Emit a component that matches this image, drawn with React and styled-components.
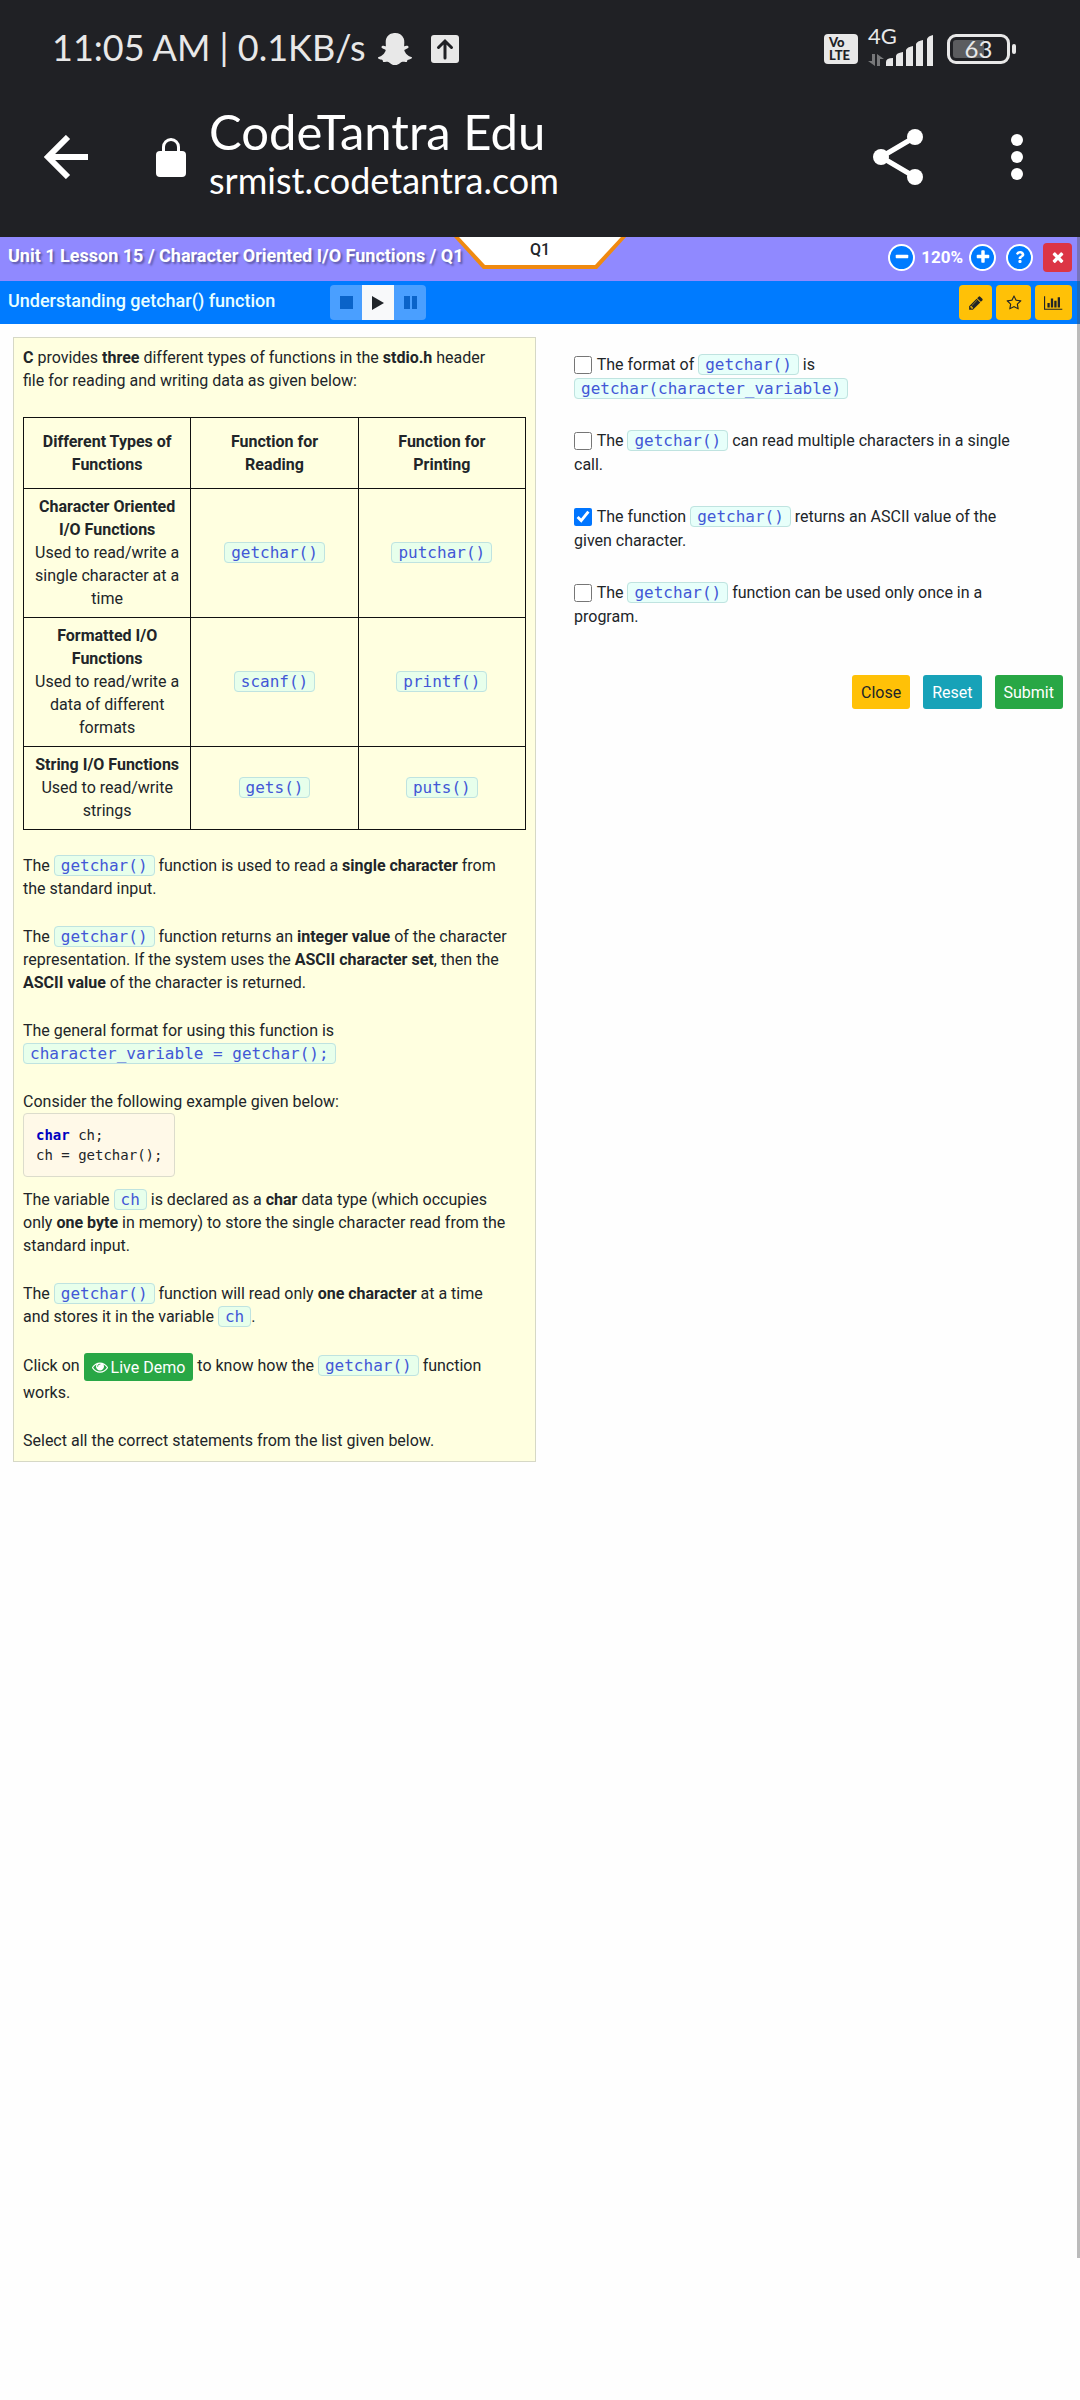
import React from "react";
import styled, { createGlobalStyle } from "styled-components";
import { FaSnapchatGhost, FaQuestion } from "react-icons/fa";

const GlobalStyle = createGlobalStyle`
  *, *::before, *::after { box-sizing: border-box; }
  body {
    margin: 0;
    background: #fefefe;
    color: #212529;
    font-family: Roboto, "Liberation Sans", sans-serif;
    font-size: 16px;
    line-height: 23px;
  }
  button { font-family: inherit; cursor: pointer; }
`;

/* ---------- device chrome ---------- */

const Chrome = styled.header`
  background: #202125;
  color: #fff;
  height: 237px;
  font-family: Lato, Roboto, sans-serif;
`;

const StatusBar = styled.div`
  display: flex;
  align-items: center;
  height: 94px;
  padding: 0 64px 0 52px;
  color: #e8e8e8;
`;

const Clock = styled.span`
  font-size: 36px;
  line-height: 48px;
  white-space: nowrap;
`;

const Spacer = styled.span`
  flex: 1;
`;

const StatusIcons = styled.span`
  display: flex;
  align-items: center;
  gap: 19px;
  margin-left: 12px;
  padding-top: 4px;
`;

const Indicators = styled.span`
  display: flex;
  align-items: center;
  gap: 10px;
  padding-top: 4px;
`;

const Volte = styled.span`
  display: flex;
  flex-direction: column;
  align-items: flex-start;
  justify-content: center;
  width: 34px;
  height: 30px;
  padding-left: 5px;
  border-radius: 4px;
  background: #e8e8e8;
  color: #202125;
  font-size: 13px;
  font-weight: 900;
  line-height: 13px;
`;

const Network = styled.span`
  display: grid;
  grid-template-columns: 18px 48px;
  height: 42px;
  margin-bottom: 9px;
`;

const NetworkType = styled.span`
  grid-row: 1;
  grid-column: 1;
  font-size: 22px;
  line-height: 24px;
  white-space: nowrap;
`;

const Traffic = styled.svg`
  grid-row: 1;
  grid-column: 1;
  align-self: end;
`;

const Bars = styled.svg`
  grid-row: 1;
  grid-column: 2;
  align-self: end;
`;

const Battery = styled.span`
  display: flex;
  align-items: center;
  margin-left: 3px;

  &::after {
    content: "";
    width: 4px;
    height: 10px;
    margin-left: 2px;
    border-radius: 2px;
    background: #e8e8e8;
  }
`;

const BatteryBody = styled.span`
  width: 63px;
  height: 30px;
  border: 3px solid #e8e8e8;
  border-radius: 9px;
  padding: 3px;
  font-size: 24px;
  line-height: 18px;
  text-align: center;
  background: linear-gradient(90deg, #5b5c5f 60%, transparent 60%) content-box;
`;

const BrowserBar = styled.div`
  display: flex;
  align-items: center;
  height: 126px;
  padding: 0 57px 0 44px;
`;

const IconButton = styled.button`
  display: flex;
  padding: 0;
  border: 0;
  background: none;
  color: inherit;
`;

const Lock = styled.svg`
  margin-left: 68px;
`;

const Address = styled.div`
  flex: 1;
  margin-left: 23px;
  padding-bottom: 8px;
  white-space: nowrap;
`;

const PageTitle = styled.div`
  font-size: 49px;
  line-height: 54px;
`;

const PageHost = styled.div`
  font-size: 36px;
  line-height: 44px;
`;

const BrowserActions = styled.div`
  display: flex;
  align-items: center;
  gap: 88px;
`;

/* ---------- lesson bars ---------- */

const WebView = styled.div`
  position: relative;
  min-height: calc(100vh - 379px);
`;

const ScrollThumb = styled.div`
  position: absolute;
  top: 0;
  right: 0;
  bottom: 0;
  width: 3px;
  background: rgba(80, 80, 80, 0.38);
`;

const LessonBar = styled.div`
  display: grid;
  grid-template-columns: minmax(0, 1fr) auto minmax(0, 1fr);
  height: 44px;
  padding: 0 8px;
  background: #9089ff;
  color: #fff;
`;

const Breadcrumb = styled.h1`
  margin: 0;
  padding-top: 7px;
  font-size: 18px;
  font-weight: 700;
  line-height: 24px;
  white-space: nowrap;
  text-shadow: 2px 2px 2px rgba(0, 0, 0, 0.35);
`;

const QuestionTab = styled.div`
  width: 172px;
  height: 32px;
  background: #f08a10;
  clip-path: polygon(0 0, 100% 0, 143px 100%, 29px 100%);
`;

const QuestionLabel = styled.div`
  height: 28px;
  background: #fff;
  color: #212529;
  clip-path: polygon(5px 0, 167px 0, 141px 100%, 31px 100%);
  font-size: 16px;
  font-weight: 500;
  line-height: 26px;
  text-align: center;
`;

const LessonTools = styled.div`
  display: flex;
  justify-content: flex-end;
  align-items: center;
  height: 40px;
  gap: 10px;
`;

const ZoomControl = styled.div`
  display: flex;
  align-items: center;
  gap: 6px;
`;

const ZoomValue = styled.output`
  font-size: 17px;
  font-weight: 700;
`;

const RoundButton = styled.button`
  display: flex;
  align-items: center;
  justify-content: center;
  width: 27px;
  height: 27px;
  padding: 0;
  border: 2px solid #fff;
  border-radius: 50%;
  background: #007bff;
  color: #fff;
`;

const SquareButton = styled.button`
  display: flex;
  align-items: center;
  justify-content: center;
  width: ${(p) => p.$width}px;
  height: ${(p) => p.$height}px;
  padding: 0;
  border: 0;
  border-radius: 4px;
  background: ${(p) => p.$bg};
  color: ${(p) => p.$fg};
`;

const TopicBar = styled.div`
  display: flex;
  align-items: center;
  height: 43px;
  padding: 0 8px;
  background: #007bff;
  color: #e8ffff;
`;

const Topic = styled.h2`
  flex: 0 0 322px;
  margin: 0;
  padding-bottom: 3px;
  font-size: 18px;
  font-weight: 500;
  line-height: 24px;
`;

const Player = styled.div`
  display: flex;
  border-radius: 4px;
  overflow: hidden;
`;

const PlayerButton = styled.button`
  display: flex;
  align-items: center;
  justify-content: center;
  width: 32px;
  height: 35px;
  padding: 0;
  border: 0;
  background: ${(p) => (p.$active ? "#f8f9fa" : "#4a9fff")};
  color: ${(p) => (p.$active ? "#212529" : "#0a63c9")};
`;

const TopicTools = styled.div`
  display: flex;
  gap: 4px;
  margin-left: auto;
`;

/* ---------- content ---------- */

const Columns = styled.main`
  display: grid;
  grid-template-columns: 1fr 1fr;
  align-items: start;
  padding-top: 13px;
`;

const Lesson = styled.article`
  margin: 0 4px 0 13px;
  padding: 8px 9px 9px;
  border: 1px solid #d6d8c6;
  background: #ffffe0;
`;

const Para = styled.p`
  margin: 0 0 ${(p) => (p.$tight ? 0 : 25)}px;
  padding-right: 18px;
`;

const Code = styled.code`
  padding: 0 6px;
  border: 1px solid #bfe3e0;
  border-radius: 4px;
  background: rgba(208, 255, 246, 0.5);
  color: #4257d6;
  font-family: "DejaVu Sans Mono", monospace;
  font-size: 16px;
  line-height: 20px;
  white-space: nowrap;
`;

const FunctionTable = styled.table`
  width: 100%;
  margin-bottom: 24px;
  border-collapse: collapse;
  table-layout: fixed;
  text-align: center;
`;

const Cell = styled.td`
  padding: 6px 6px 7px;
  border: 1px solid #111;
`;

const HeadCell = styled.th`
  padding: 12px 16px;
  border: 1px solid #111;
  font-weight: 700;
`;

const Listing = styled.pre`
  width: fit-content;
  margin: 0 0 11px;
  padding: 11px 12px;
  border: 1px solid #dcdccc;
  border-radius: 4px;
  background: #fff9e8;
  font-family: "DejaVu Sans Mono", monospace;
  font-size: 14px;
  line-height: 20px;
`;

const Keyword = styled.b`
  color: #0000c0;
`;

const DemoButton = styled.button`
  display: inline-flex;
  align-items: center;
  gap: 3px;
  height: 28px;
  padding: 0 8px;
  border: 0;
  border-radius: 3px;
  background: #28a745;
  color: #fff;
  font-size: 16px;
  vertical-align: middle;
`;

const Quiz = styled.form`
  padding: 16px 17px 0 34px;
`;

const Option = styled.label`
  display: block;
  margin: 0 32px 28px 0;
  line-height: 24px;
`;

const Tick = styled.input`
  width: 18px;
  height: 18px;
  margin: 0 1px 0 0;
  vertical-align: -4px;
  accent-color: #0075ff;
`;

const Actions = styled.div`
  display: flex;
  justify-content: flex-end;
  gap: 13px;
  padding-top: 18px;
`;

const ActionButton = styled.button`
  height: 34px;
  padding: 0 9px;
  border: 0;
  border-radius: 3px;
  background: ${(p) => p.$bg};
  color: ${(p) => p.$fg || "#fff"};
  font-size: 16px;
`;

/* ---------- glyphs ---------- */

const glyphs = {
  eye: [1792, "M1664 960q-152-236-381-353 61 104 61 225 0 185-131.5 316.5t-316.5 131.5-316.5-131.5-131.5-316.5q0-121 61-225-229 117-381 353 133 205 333.5 326.5t434.5 121.5 434.5-121.5 333.5-326.5zm-720-384q0-20-14-34t-34-14q-125 0-214.5 89.5t-89.5 214.5q0 20 14 34t34 14 34-14 14-34q0-86 61-147t147-61q20 0 34-14t14-34zm848 384q0 34-20 69-140 230-376.5 368.5t-499.5 138.5-499.5-139-376.5-368q-20-35-20-69t20-69q140-229 376.5-368t499.5-139 499.5 139 376.5 368q20 35 20 69z"],
  chart: [2048, "M640 896v512h-256v-512h256zm384-512v1024h-256v-1024h256zm1024 1152v128h-2048v-1536h128v1408h1920zm-640-896v768h-256v-768h256zm384-384v1152h-256v-1152h256z"],
  star: [1792, "M1201 1004l306-297-422-62-189-382-189 382-422 62 306 297-73 421 378-199 377 199zm527-357q0 22-26 48l-363 354 86 500q1 7 1 20 0 50-41 50-19 0-40-12l-449-236-449 236q-22 12-40 12-21 0-31.5-14.5t-10.5-35.5q0-6 2-20l86-500-364-354q-25-27-25-48 0-37 56-46l502-73 225-455q19-41 49-41t49 41l225 455 502 73q56 9 56 46z"],
  pencil: [1792, "M491 1536l91-91-235-235-91 91v107h128v128h107zm523-928q0-22-22-22-10 0-17 7l-542 542q-7 7-7 17 0 22 22 22 10 0 17-7l542-542q7-7 7-17zm-54-192l416 416-832 832h-416v-416zm683 96q0 53-37 90l-166 166-416-416 166-165q36-38 90-38 53 0 91 38l235 234q37 39 37 91z"],
  plus: [1792, "M1600 736v192q0 40-28 68t-68 28h-416v416q0 40-28 68t-68 28h-192q-40 0-68-28t-28-68v-416h-416q-40 0-68-28t-28-68v-192q0-40 28-68t68-28h416v-416q0-40 28-68t68-28h192q40 0 68 28t28 68v416h416q40 0 68 28t28 68z"],
  minus: [1792, "M1600 736v192q0 40-28 68t-68 28h-1216q-40 0-68-28t-28-68v-192q0-40 28-68t68-28h1216q40 0 68 28t28 68z"],
  times: [1792, "M1490 1322q0 40-28 68l-136 136q-28 28-68 28t-68-28l-294-294-294 294q-28 28-68 28t-68-28l-136-136q-28-28-28-68t28-68l294-294-294-294q-28-28-28-68t28-68l136-136q28-28 68-28t68 28l294 294 294-294q28-28 68-28t68 28l136 136q28 28 28 68t-28 68l-294 294 294 294q28 28 28 68z"],
};

function Glyph({ name, size }) {
  const [width, d] = glyphs[name];
  return (
    <svg viewBox={`0 0 ${width} 1792`} height={size} fill="currentColor" aria-hidden="true">
      <path d={d} />
    </svg>
  );
}

const rows = [
  ["Character Oriented I/O Functions", "Used to read/write a single character at a time", "getchar()", "putchar()"],
  ["Formatted I/O Functions", "Used to read/write a data of different formats", "scanf()", "printf()"],
  ["String I/O Functions", "Used to read/write strings", "gets()", "puts()"],
];

const options = [
  { body: <>The format of <Code>getchar()</Code> is <Code>getchar(character_variable)</Code></> },
  { body: <>The <Code>getchar()</Code> can read multiple characters in a single call.</> },
  { body: <>The function <Code>getchar()</Code> returns an ASCII value of the given character.</>, checked: true },
  { body: <>The <Code>getchar()</Code> function can be used only once in a program.</> },
];

function DeviceChrome() {
  return (
    <Chrome>
      <StatusBar>
        <Clock>11:05 AM | 0.1KB/s</Clock>
        <StatusIcons>
          <FaSnapchatGhost size={34} aria-hidden="true" />
          <svg width="28" height="28" viewBox="0 0 28 28" aria-hidden="true">
            <rect width="28" height="28" rx="3" fill="#e8e8e8" />
            <path d="M14 23V7M7.500 12.500L14 6l6.500 6.500" fill="none" stroke="#202125" strokeWidth="3" strokeLinecap="round" />
          </svg>
        </StatusIcons>
        <Spacer />
        <Indicators>
          <Volte><span>Vo</span><span>LTE</span></Volte>
          <Network>
            <NetworkType>4G</NetworkType>
            <Traffic width="16" height="12" viewBox="0 0 16 12" fill="#77787a" aria-hidden="true">
              <path d="M4 0h3v12L0 7h4zM9 0l7 5h-4v7H9z" />
            </Traffic>
            <Bars width="48" height="31" viewBox="0 0 48 31" fill="#e8e8e8" aria-hidden="true">
              <path d="M0 31v-4q0-4 7-4v8zM10 31V21q0-3 7-4v14zM20 31V15q1-3 7-4v20zM30 31V9q1-3 7-4v26zM41 31V4q1-3 6-4v31z" />
            </Bars>
          </Network>
          <Battery><BatteryBody>63</BatteryBody></Battery>
        </Indicators>
      </StatusBar>
      <BrowserBar>
        <IconButton aria-label="Back">
          <svg width="44" height="44" viewBox="0 0 44 44" fill="none" stroke="#fff" strokeWidth="6" aria-hidden="true">
            <path d="M44 22H6M24 2L4 22l20 20" />
          </svg>
        </IconButton>
        <Lock width="30" height="39" viewBox="0 0 30 39" aria-label="Secure">
          <rect y="13" width="30" height="26" rx="4" fill="#fff" />
          <path d="M7.500 15V9a7.500 7.500 0 0 1 15 0v6" fill="none" stroke="#fff" strokeWidth="3" />
        </Lock>
        <Address>
          <PageTitle>CodeTantra Edu</PageTitle>
          <PageHost>srmist.codetantra.com</PageHost>
        </Address>
        <BrowserActions>
          <IconButton aria-label="Share">
            <svg width="50" height="56" viewBox="0 0 50 56" aria-hidden="true">
              <path d="M42 8L8 28l34 20" fill="none" stroke="#fff" strokeWidth="5" />
              <g fill="#fff"><circle cx="42" cy="8" r="8" /><circle cx="8" cy="28" r="8" /><circle cx="42" cy="48" r="8" /></g>
            </svg>
          </IconButton>
          <IconButton aria-label="More">
            <svg width="12" height="46" viewBox="0 0 12 46" fill="#fff" aria-hidden="true">
              <circle cx="6" cy="6" r="6" /><circle cx="6" cy="23" r="6" /><circle cx="6" cy="40" r="6" />
            </svg>
          </IconButton>
        </BrowserActions>
      </BrowserBar>
    </Chrome>
  );
}

function LessonHeader() {
  return (
    <>
      <LessonBar>
        <Breadcrumb>Unit 1 Lesson 15 / Character Oriented I/O Functions / Q1</Breadcrumb>
        <QuestionTab><QuestionLabel>Q1</QuestionLabel></QuestionTab>
        <LessonTools>
          <ZoomControl>
            <RoundButton aria-label="Zoom out"><Glyph name="minus" size={16} /></RoundButton>
            <ZoomValue>120%</ZoomValue>
            <RoundButton aria-label="Zoom in"><Glyph name="plus" size={16} /></RoundButton>
          </ZoomControl>
          <RoundButton aria-label="Help"><FaQuestion size={12} /></RoundButton>
          <SquareButton $width={29} $height={29} $bg="#dc3545" $fg="#fff" aria-label="Close lesson">
            <Glyph name="times" size={16} />
          </SquareButton>
        </LessonTools>
      </LessonBar>
      <TopicBar>
        <Topic>Understanding getchar() function</Topic>
        <Player>
          <PlayerButton aria-label="Stop">
            <svg width="13" height="13" fill="currentColor"><rect width="13" height="13" /></svg>
          </PlayerButton>
          <PlayerButton $active aria-label="Play">
            <svg width="12" height="14" fill="currentColor"><path d="M0 0l12 7-12 7z" /></svg>
          </PlayerButton>
          <PlayerButton aria-label="Pause">
            <svg width="13" height="13" fill="currentColor"><path d="M0 0h6v13H0zM8 0h5v13H8z" /></svg>
          </PlayerButton>
        </Player>
        <TopicTools>
          <SquareButton $width={33} $height={35} $bg="#ffc107" $fg="#212529" aria-label="Edit"><Glyph name="pencil" size={16} /></SquareButton>
          <SquareButton $width={35} $height={35} $bg="#ffc107" $fg="#212529" aria-label="Favourite"><Glyph name="star" size={16} /></SquareButton>
          <SquareButton $width={37} $height={35} $bg="#ffc107" $fg="#212529" aria-label="Statistics"><Glyph name="chart" size={16} /></SquareButton>
        </TopicTools>
      </TopicBar>
    </>
  );
}

function LessonText() {
  return (
    <Lesson>
      <Para><b>C</b> provides <b>three</b> different types of functions in the <b>stdio.h</b> header file for reading and writing data as given below:</Para>
      <FunctionTable>
        <thead>
          <tr>
            <HeadCell>Different Types of Functions</HeadCell>
            <HeadCell>Function for Reading</HeadCell>
            <HeadCell>Function for Printing</HeadCell>
          </tr>
        </thead>
        <tbody>
          {rows.map(([name, use, read, write]) => (
            <tr key={name}>
              <Cell><b>{name}</b><br />{use}</Cell>
              <Cell><Code>{read}</Code></Cell>
              <Cell><Code>{write}</Code></Cell>
            </tr>
          ))}
        </tbody>
      </FunctionTable>
      <Para>The <Code>getchar()</Code> function is used to read a <b>single character</b> from the standard input.</Para>
      <Para>The <Code>getchar()</Code> function returns an <b>integer value</b> of the character representation. If the system uses the <b>ASCII character set</b>, then the <b>ASCII value</b> of the character is returned.</Para>
      <Para>The general format for using this function is <Code>character_variable = getchar();</Code></Para>
      <Para $tight>Consider the following example given below:</Para>
      <Listing><Keyword>char</Keyword>{" ch;\nch = getchar();"}</Listing>
      <Para>The variable <Code>ch</Code> is declared as a <b>char</b> data type (which occupies only <b>one byte</b> in memory) to store the single character read from the standard input.</Para>
      <Para>The <Code>getchar()</Code> function will read only <b>one character</b> at a time and stores it in the variable <Code>ch</Code>.</Para>
      <Para>Click on <DemoButton><Glyph name="eye" size={16} />Live Demo</DemoButton> to know how the <Code>getchar()</Code> function works.</Para>
      <Para $tight>Select all the correct statements from the list given below.</Para>
    </Lesson>
  );
}

export default function App() {
  return (
    <>
      <GlobalStyle />
      <DeviceChrome />
      <WebView>
        <LessonHeader />
        <Columns>
          <LessonText />
          <Quiz onSubmit={(e) => e.preventDefault()}>
            {options.map((option, i) => (
              <Option key={i}><Tick type="checkbox" defaultChecked={option.checked} /> {option.body}</Option>
            ))}
            <Actions>
              <ActionButton type="button" $bg="#ffc107" $fg="#212529">Close</ActionButton>
              <ActionButton type="reset" $bg="#17a2b8">Reset</ActionButton>
              <ActionButton type="submit" $bg="#28a745">Submit</ActionButton>
            </Actions>
          </Quiz>
        </Columns>
        <ScrollThumb />
      </WebView>
    </>
  );
}
